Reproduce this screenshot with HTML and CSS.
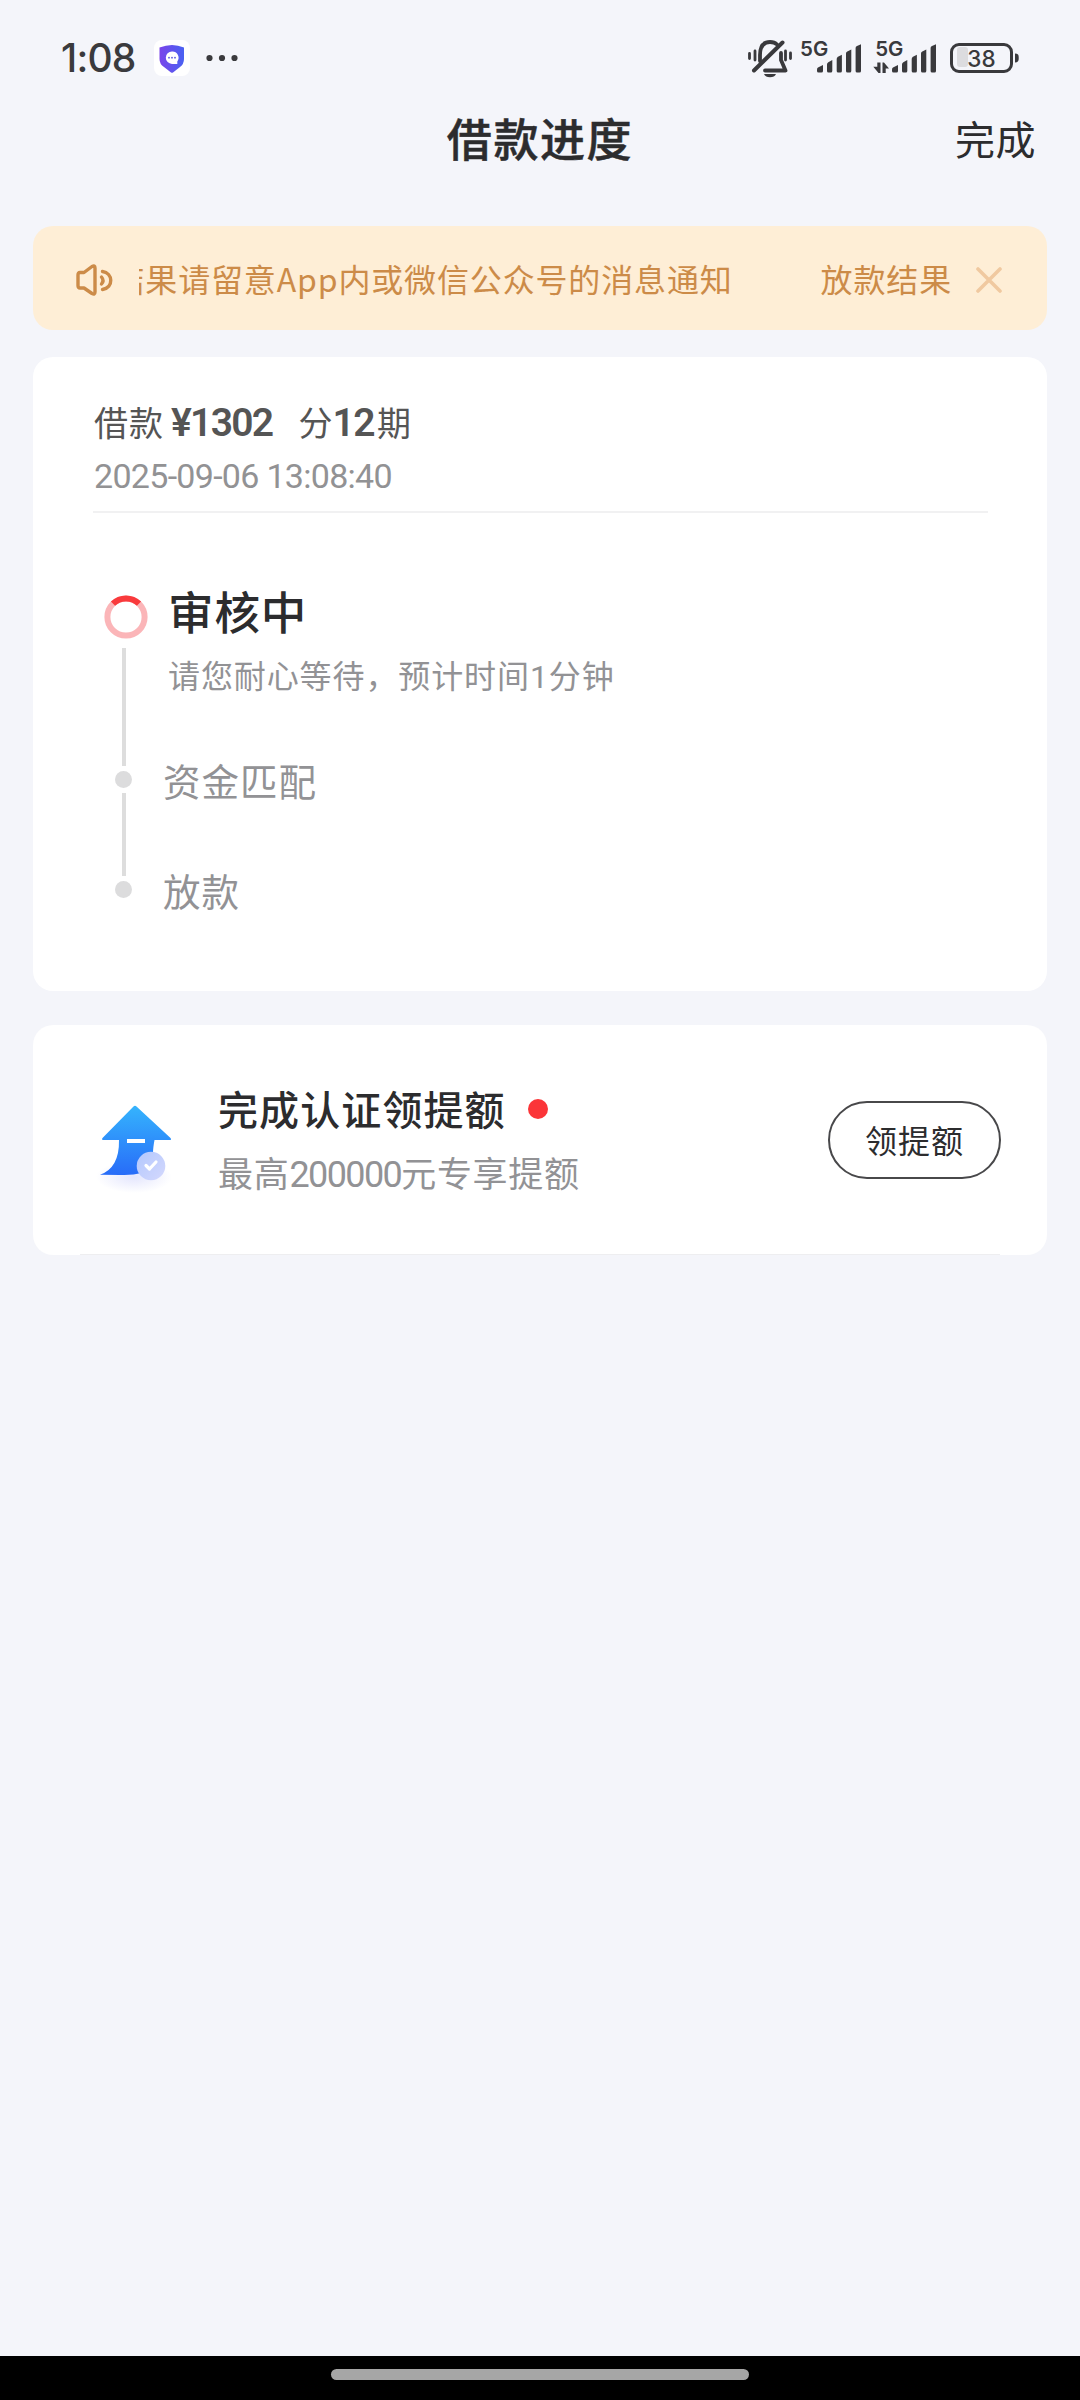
FILE: index.html
```html
<!DOCTYPE html>
<html lang="zh-CN">
<head>
<meta charset="utf-8">
<title>借款进度</title>
<link rel="stylesheet" href="styles.css">
</head>
<body>
<div class="screen">
  <div class="status-bar">
    <span class="clock">1:08</span>
    <svg class="app-badge" width="36" height="36" viewBox="0 0 36 36">
      <defs><linearGradient id="shield" x1="0" y1="0" x2="1" y2="0"><stop offset="0" stop-color="#7a45ea"/><stop offset="1" stop-color="#4a62f2"/></linearGradient></defs>
      <rect width="36" height="36" rx="8" fill="#fff"/>
      <path d="M5.500 7.500Q12 5 18 5Q24 5 30 7.500V19Q30 24 26 27L19 32.500Q18 33.200 17 32.500L10 27Q5.500 24 5.500 19Z" fill="url(#shield)"/>
      <path d="M18 11.500a6.200 6.200 0 1 0 0 12.400h5.300v-2.500a6.200 6.200 0 0 0-5.300-9.900Z" fill="#fff"/>
      <g fill="#5b58dd"><circle cx="15" cy="17.700" r="0.900"/><circle cx="18" cy="17.700" r="0.900"/><circle cx="21" cy="17.700" r="0.900"/></g>
    </svg>
    <svg class="more" width="32" height="8" viewBox="0 0 32 8" fill="#3a3a3d"><circle cx="3.500" cy="4" r="3.100"/><circle cx="16" cy="4" r="3.100"/><circle cx="28.500" cy="4" r="3.100"/></svg>
    <svg class="status-icons" width="320" height="80" viewBox="0 0 320 80">
      <g fill="none" stroke="#39393c" stroke-linecap="round" stroke-linejoin="round">
        <path stroke-width="3.800" d="M30 41V35Q30 22 40 22Q44.500 22 47 24.500M51 33V40L55.500 50.500H35"/>
        <path stroke-width="4" d="M52.500 22.500L24 50.500"/>
        <path stroke-width="2.800" d="M25 31V40M19.500 33.500V38.500M55.500 31V40M60.500 33V38.500"/>
      </g>
      <path fill="#39393c" d="M34 54H46Q44.500 57.200 40 57.200Q35.500 57.200 34 54Z"/>
      <g fill="#39393c">
        <g id="signal">
          <path d="M87 49.500Q87 48.300 88 47.600L93 45V51Q93 52.500 91.500 52.500H88.500Q87 52.500 87 51Z"/>
          <path d="M97 44.500Q97 43 98.300 42.300L102.300 40V51Q102.300 52.500 100.800 52.500H98.500Q97 52.500 97 51Z"/>
          <path d="M106.700 39Q106.700 37.500 108 36.800L111.900 34.800V51Q111.900 52.500 110.400 52.500H108.200Q106.700 52.500 106.700 51Z"/>
          <path d="M116 33.500Q116 32 117.300 31.400L121.300 29.400V51Q121.300 52.500 119.800 52.500H117.500Q116 52.500 116 51Z"/>
          <path d="M125.600 28Q125.600 26.500 127 25.900L131 24.200V51Q131 52.500 129.500 52.500H127.100Q125.600 52.500 125.600 51Z"/>
        </g>
        <use href="#signal" x="75"/>
        <text class="net" x="70" y="36">5G</text>
        <text class="net" x="145.200" y="36">5G</text>
        <path d="M147.300 42.500H150.500V53H148.500L143.300 46.800H147.300ZM152.500 53V42.500H154L159 48.500H155.700V53Z"/>
        <path d="M285 33.500Q288.700 33.500 288.700 37V39Q288.700 42.500 285 42.500Z"/>
      </g>
      <rect x="227" y="27" width="11" height="20" rx="3" fill="#dcdcdf"/>
      <rect x="221.500" y="24.500" width="60" height="27" rx="7.500" fill="none" stroke="#39393c" stroke-width="3"/>
      <text class="level" x="251.500" y="46.500">38</text>
    </svg>
  </div>

  <header class="title-bar">
    <h1>借款进度</h1>
    <a class="done">完成</a>
  </header>

  <main>
    <section class="notice">
      <svg class="speaker" width="40" height="34" viewBox="0 0 40 34" fill="none" stroke="#cc8b48" stroke-width="3.400" stroke-linecap="round" stroke-linejoin="round">
        <path d="M5 9.500H9L17 3.500Q20 2 20 5V29Q20 32 17 30.500L9 25H5Q3 25 3 22.500V12Q3 9.500 5 9.500Z"/>
        <path d="M27.500 8.500C38 10 39 24.500 27.500 26.500"/>
        <path d="M26.500 14Q29.500 17.500 26.500 21"/>
      </svg>
      <div class="marquee"><span class="message first">放款结果请留意App内或微信公众号的消息通知</span><span class="message">放款结果</span></div>
      <svg class="close" width="26" height="26" viewBox="0 0 26 26" stroke="#f0c9a0" stroke-width="3.600" stroke-linecap="round"><path d="M2 2L24 24M24 2L2 24"/></svg>
    </section>

    <section class="card progress">
      <div class="loan">
        <p class="summary">借款<b class="amount">¥1302</b><span class="term">分</span><b class="count">12</b>期</p>
        <p class="time">2025-09-06 13:08:40</p>
      </div>
      <div class="timeline">
        <div class="rail">
          <svg class="spinner" width="44" height="44" viewBox="0 0 44 44" fill="none" stroke-width="6">
            <circle cx="22" cy="22" r="18.600" stroke="#fbb5b8"/>
            <path d="M9 8.700A18.600 18.600 0 0 1 35 8.700" stroke="#f93a3c"/>
          </svg>
          <i class="line long"></i><i class="dot"></i><i class="line"></i><i class="dot"></i>
        </div>
        <div class="steps">
          <div class="step current"><h2>审核中</h2><p>请您耐心等待，预计时间<span class="digit">1</span>分钟</p></div>
          <div class="step">资金匹配</div>
          <div class="step">放款</div>
        </div>
      </div>
    </section>

    <section class="card offer">
      <svg class="offer-icon" width="110" height="120" viewBox="0 0 110 120">
        <defs>
          <linearGradient id="arrow" x1="0" y1="0" x2="0" y2="1"><stop offset="0" stop-color="#35b4fd"/><stop offset="1" stop-color="#286cf8"/></linearGradient>
          <linearGradient id="seal" x1="0" y1="0" x2="1" y2="1"><stop offset="0" stop-color="#b3c8fd"/><stop offset="1" stop-color="#d4d8fd"/></linearGradient>
          <radialGradient id="shade"><stop offset="0" stop-color="#e4e6fd"/><stop offset="1" stop-color="#fff"/></radialGradient>
        </defs>
        <ellipse cx="54" cy="97" rx="38" ry="16" fill="url(#shade)"/>
        <path d="M53.500 26.500Q55 25 56.500 26.500L90.500 58Q92 60 89.500 60H74.500Q73 68 73 73V87Q63 96 40 95L20 94.700Q39.500 88 39 60H24Q21 60 22.500 58Z" fill="url(#arrow)"/>
        <path fill="#fff" d="M47 59H65V63H47Z"/>
        <circle cx="71" cy="86" r="14.300" fill="url(#seal)"/>
        <path d="M66 85.500L69.500 89L76 82" fill="none" stroke="#fff" stroke-width="3.200" stroke-linecap="round" stroke-linejoin="round"/>
      </svg>
      <div class="offer-text">
        <h3>完成认证领提额<i class="new"></i></h3>
        <p>最高<span class="digit">200000</span>元专享提额</p>
      </div>
      <a class="button">领提额</a>
    </section>
  </main>

  <footer class="nav"><i class="handle"></i></footer>
</div>
</body>
</html>
```
FILE: styles.css
```css
* { box-sizing: border-box; margin: 0; padding: 0; }

body { font-family: "Noto Sans CJK SC", sans-serif; background: #f4f5fa; color: #2c2c2e; }

svg { display: block; flex: none; }

.screen { display: flex; flex-direction: column; width: 1080px; height: 2400px; overflow: hidden; }

/* system status bar */
.status-bar { display: flex; align-items: center; height: 80px; margin-top: 18px; padding: 0 30px 0 61px; }
.clock { width: 93px; font: 500 39px/80px Inter, sans-serif; letter-spacing: -0.800px; color: #3a3a3d; }
.more { margin-left: 16px; }
.status-icons { margin: 4px 0 0 auto; }
.net { font: 600 20.500px Inter, sans-serif; letter-spacing: 0; }
.level { font: 500 22.500px Inter, sans-serif; text-anchor: middle; fill: #39393c; }

/* title */
.title-bar { display: grid; grid-template-columns: 1fr auto 1fr; align-items: center; height: 80px; padding: 0 44px; }
.title-bar h1 { grid-column: 2; font-size: 45px; font-weight: 500; line-height: 78px; letter-spacing: 1.600px; -webkit-text-stroke: 0.500px #2c2c2e; }
.done { justify-self: end; font-size: 40px; line-height: 80px; letter-spacing: 0.500px; }

main { display: flex; flex-direction: column; padding: 48px 33px 0; }

/* scrolling notice */
.notice { display: flex; align-items: center; height: 104px; padding: 0 44px 0 42px; border-radius: 20px; background: #feeed6; }
.speaker { margin-top: 4px; }
.marquee { display: flex; justify-content: flex-end; width: 813px; margin: 0 24px 0 24px; overflow: hidden; white-space: nowrap; }
.message { flex: none; font-size: 32px; line-height: 60px; letter-spacing: 0.850px; color: #cc8b48; }
.message.first { margin-right: 88px; }
.close { margin-top: 4px; }

/* cards */
.card { border-radius: 20px; background: #fff; }
.progress { height: 634px; margin-top: 27px; padding: 0 59px 0 60px; }
.loan { height: 156px; padding: 37px 0 0 1px; border-bottom: 2px solid #f1f1f2; }
.summary { display: flex; font-size: 34px; line-height: 56px; letter-spacing: 1px; color: #555; }
.summary b { font: 600 39px/58px Roboto, sans-serif; letter-spacing: -1.700px; }
.amount { margin-left: 7px; }
.term { margin-left: 26px; }
.summary .count { margin: 0 3px 0 -1px; letter-spacing: -1.500px; }
.time { font: 400 34px/48px Roboto, sans-serif; letter-spacing: -0.700px; color: #929294; }

.timeline { display: flex; padding-top: 82px; }
.rail { display: flex; flex-direction: column; align-items: center; width: 61px; }
.spinner { margin-left: 5px; }
.line { width: 4px; height: 83px; background: #ddd; }
.line.long { height: 118px; margin-top: 9px; }
.dot { width: 17px; height: 17px; margin: 5px 0; border-radius: 50%; background: #dcdcdd; }
.steps { flex: 1; padding-left: 9px; }
.step { height: 110px; font-size: 37.500px; line-height: 56px; letter-spacing: 1px; color: #929295; }
.step.current { height: 172px; padding-left: 5px; }
.step h2 { height: 65px; margin-top: -15px; font-size: 45.500px; font-weight: 500; line-height: 60px; letter-spacing: 0.900px; color: #2c2c2e; }
.step p { font-size: 32px; line-height: 59px; letter-spacing: 0.900px; }
.digit { font-family: Roboto, sans-serif; font-weight: 400; }

/* quota offer */
.offer {
  display: flex; align-items: center; height: 230px; margin-top: 34px; padding: 0 46px 0 47px;
  background: linear-gradient(#eeeef0, #eeeef0) center bottom / 920px 1px no-repeat #fff;
}
.offer-text { margin: 2px 0 0 28px; }
.offer h3 { display: flex; align-items: center; font-size: 40px; font-weight: 500; line-height: 60px; letter-spacing: 1.100px; }
.new { width: 20px; height: 20px; margin: 2px 0 0 22px; border-radius: 50%; background: #fb3538; }
.offer p { margin-top: 4px; font-size: 35px; line-height: 60px; letter-spacing: 0.700px; color: #929295; }
.offer .digit { font-size: 36px; letter-spacing: -1.600px; }
.button { width: 173px; height: 78px; margin-left: auto; border: 2px solid #48484a; border-radius: 39px; font-size: 32px; line-height: 72px; letter-spacing: 1px; text-align: center; }

/* gesture bar */
.nav { display: flex; justify-content: center; height: 44px; margin-top: auto; padding-top: 13px; background: #000; }
.handle { width: 418px; height: 11px; border-radius: 6px; background: #a6a6a6; }
```
